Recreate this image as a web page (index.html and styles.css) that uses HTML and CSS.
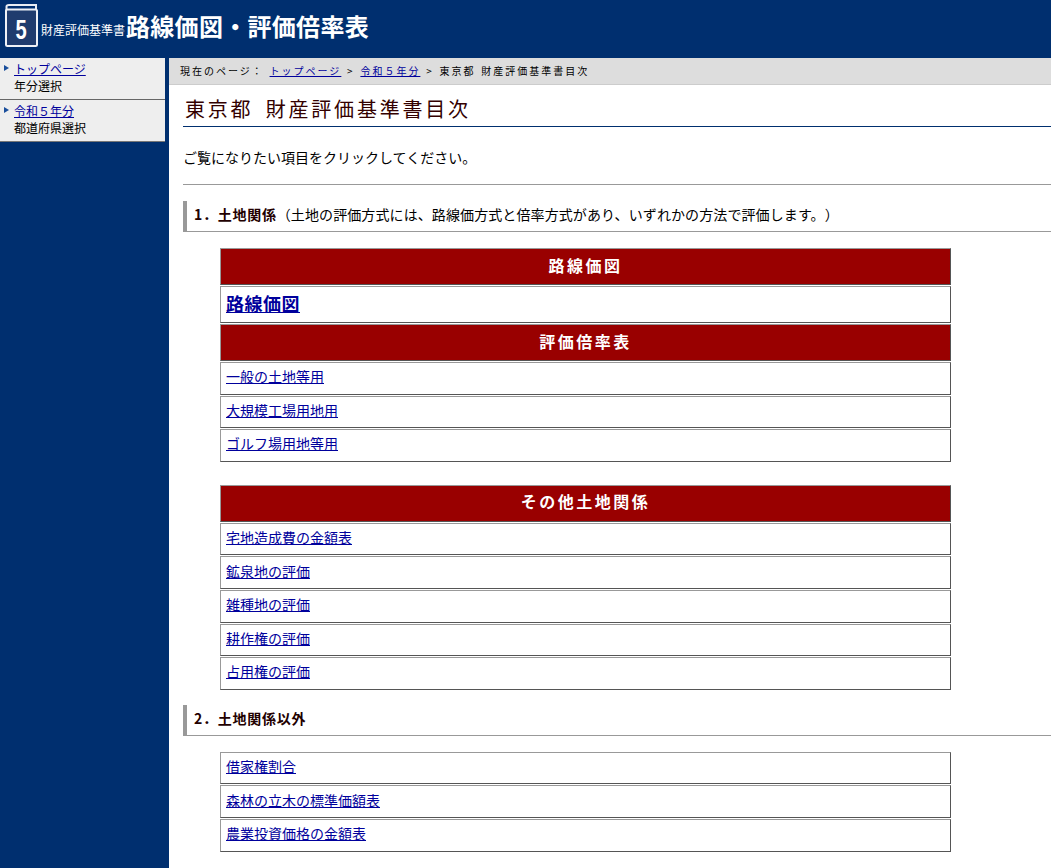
FILE: index.html
```html
<!DOCTYPE html>
<html lang="ja">
<head>
<meta charset="utf-8">
<title>東京都 財産評価基準書目次</title>
<link rel="stylesheet" href="styles.css">
</head>
<body>
<header class="site-header">
  <svg class="logo" width="34" height="44" viewBox="0 0 34 44" aria-hidden="true">
    <path d="M1.500 8 V2.500 Q1.500 1 4 1 H31 V6" fill="none" stroke="#e8edf4" stroke-width="2"/>
    <rect x="1" y="5.500" width="31" height="36.500" rx="1.500" fill="#1f3c6e" stroke="#eef1f6" stroke-width="2"/>
    <text class="logo-num" text-anchor="middle" transform="translate(16 35) scale(.72 1)">5</text>
  </svg>
  <span class="header-sub">財産評価基準書</span>
  <span class="header-title">路線価図・評価倍率表</span>
</header>
<div class="layout">
  <nav class="side">
    <div class="side-item">
      <a href="#">トップページ</a>
      <span>年分選択</span>
    </div>
    <div class="side-item">
      <a href="#">令和５年分</a>
      <span>都道府県選択</span>
    </div>
  </nav>
  <main class="main">
    <div class="crumbs">現在のページ： <a href="#">トップページ</a> &gt; <a href="#">令和５年分</a> &gt; 東京都 財産評価基準書目次</div>
    <h1 class="page-title">東京都 財産評価基準書目次</h1>
    <p class="lead">ご覧になりたい項目をクリックしてください。</p>
    <hr class="rule">
    <h2 class="section"><b>1．土地関係</b><span>（土地の評価方式には、路線価方式と倍率方式があり、いずれかの方法で評価します。）</span></h2>
    <table class="list first">
      <tr><th>路線価図</th></tr>
      <tr><td class="big"><a href="#">路線価図</a></td></tr>
      <tr><th>評価倍率表</th></tr>
      <tr><td><a href="#">一般の土地等用</a></td></tr>
      <tr><td><a href="#">大規模工場用地用</a></td></tr>
      <tr><td><a href="#">ゴルフ場用地等用</a></td></tr>
    </table>
    <table class="list second">
      <tr><th>その他土地関係</th></tr>
      <tr><td><a href="#">宅地造成費の金額表</a></td></tr>
      <tr><td><a href="#">鉱泉地の評価</a></td></tr>
      <tr><td><a href="#">雑種地の評価</a></td></tr>
      <tr><td><a href="#">耕作権の評価</a></td></tr>
      <tr><td><a href="#">占用権の評価</a></td></tr>
    </table>
    <h2 class="section section-two"><b>2．土地関係以外</b></h2>
    <table class="list third">
      <tr><td><a href="#">借家権割合</a></td></tr>
      <tr><td><a href="#">森林の立木の標準価額表</a></td></tr>
      <tr><td><a href="#">農業投資価格の金額表</a></td></tr>
    </table>
  </main>
</div>
</body>
</html>
```
FILE: styles.css
```css
* { box-sizing: border-box; }
html, body { margin: 0; padding: 0; height: 868px; overflow: hidden; }
body {
  background: #fff;
  color: #000;
  font-family: "Noto Sans CJK JP", "Liberation Sans", sans-serif;
  font-size: 14px;
  text-spacing-trim: space-all;
}
a { color: #00009c; }

.site-header {
  height: 58px;
  background: #002f6f;
  color: #fff;
  display: flex;
  align-items: flex-start;
  padding: 4px 0 0 5px;
}
.logo { flex: none; }
.logo-num {
  font-family: "Liberation Sans", sans-serif;
  font-weight: 700;
  font-size: 28px;
  fill: #fff;
}
.header-sub { font-size: 12px; line-height: 18px; margin: 17px 0 0 2px; white-space: nowrap; }
.header-title { font-size: 24px; font-weight: 700; line-height: 30px; margin: 7px 0 0 1px; letter-spacing: 0.3px; white-space: nowrap; }

.layout { display: flex; height: 810px; }
.side { width: 169px; flex: none; background: #002f6f; padding-right: 4px; }
.side-item {
  background: #eee;
  border-bottom: 1px solid #666;
  height: 42px;
  padding: 2px 0 0 14px;
  position: relative;
  font-size: 12px;
  line-height: 17px;
}
.side-item:last-child { border-bottom-color: #777; }
.side-item::before {
  content: "";
  position: absolute;
  left: 4px;
  top: 7px;
  border-left: 5px solid #1a4f9c;
  border-top: 3px solid transparent;
  border-bottom: 3px solid transparent;
}
.side-item a, .side-item span { display: block; white-space: nowrap; }

.main { flex: 1; min-width: 0; }
.crumbs {
  height: 27px;
  background: #ddd;
  border-bottom: 1px solid #ccc;
  padding: 4px 0 0 11px;
  font-size: 10px;
  line-height: 18px;
  letter-spacing: 2px;
  word-spacing: 1.500px;
  white-space: nowrap;
}
.page-title {
  margin: 12px 0 0 14px;
  height: 30px;
  border-bottom: 1px solid #002f6f;
  padding-left: 2px;
  color: #300;
  font-size: 20px;
  font-weight: 400;
  line-height: 23px;
  letter-spacing: 2.800px;
  word-spacing: 5px;
  white-space: nowrap;
}
.lead { margin: 21px 0 0 14px; font-size: 14px; line-height: 18px; }
.rule { margin: 18px 0 0 14px; height: 2px; border: 0; border-top: 1px solid #999; background: #fff; }
.section {
  margin: 15px 0 0 14px;
  height: 31px;
  border-left: 4px solid #999;
  border-bottom: 1px solid #999;
  padding: 4px 0 0 7px;
  font-size: 14px;
  font-weight: 400;
  line-height: 18px;
  white-space: nowrap;
}
.section-two { margin-top: 14px; }
.section b { color: #200; font-size: 14px; font-weight: 700; letter-spacing: 0.750px; }
.section span { letter-spacing: 0.100px; }

.list {
  width: 733px;
  margin-left: 50px;
  border-collapse: separate;
  border-spacing: 1px;
}
.first { margin-top: 15px; }
.second { margin-top: 21px; }
.third { margin-top: 15px; }
.list th, .list td {
  border: 1px solid #999;
  border-right-color: #555;
  border-bottom-color: #555;
  padding: 0 5px 4px;
}
.list th {
  height: 37px;
  background: #900;
  color: #fff;
  font-size: 16px;
  font-weight: 700;
  letter-spacing: 2.500px;
  text-align: center;
}
.list td { height: 32.600px; font-size: 14px; }
.list td.big { height: 37px; font-size: 18px; font-weight: 700; letter-spacing: 0.500px; }
```
